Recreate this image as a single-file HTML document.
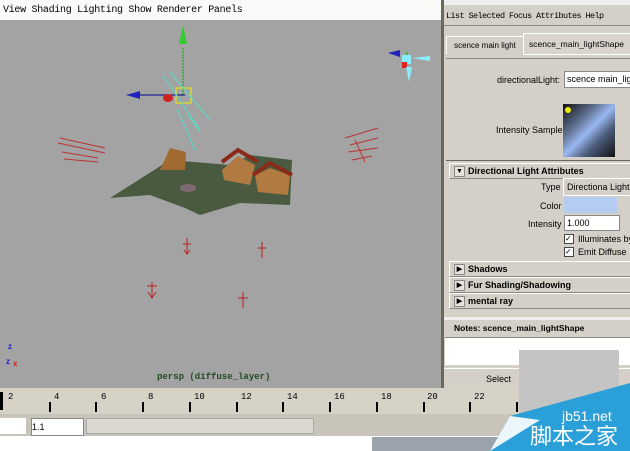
<!DOCTYPE html>
<html><head><style>
body{margin:0;width:630px;height:451px;overflow:hidden;position:relative;background:#fff;font-family:"Liberation Sans",sans-serif;}
.a{position:absolute;white-space:nowrap}
.mono{font-family:"Liberation Mono",monospace}
.hdr{position:absolute;left:449px;width:181px;height:14px;background:#d4d0c8;border:1px solid #fff;border-right:none;border-bottom-color:#888;font-size:9px;font-weight:bold;line-height:14px;white-space:nowrap}
.hdr span.t{position:absolute;left:4px;top:2px;width:9px;height:9px;border:1px solid #888;background:#e8e4dc;font-size:7px;line-height:9px;text-align:center}
.hdr span.l{position:absolute;left:18px}
.lbl{position:absolute;font-size:9px;color:#000;white-space:nowrap}
</style></head><body>
<div class="a" style="left:0;top:0;width:442px;height:20px;background:#fafaf8;border-bottom:1px solid #ccc"></div>
<div class="a mono" style="left:3px;top:5px;font-size:10px;letter-spacing:-0.3px">View Shading Lighting Show Renderer Panels</div>
<div class="a" style="left:0;top:20px;width:441px;height:368px;background:#a3a3a3"></div>
<svg class="a" style="left:0;top:20px" width="441" height="368">
<line x1="183" y1="28" x2="183" y2="76" stroke="#0a0" stroke-dasharray="2,1"/>
<polygon points="183,5 179,24 187,24" fill="#3c3"/>
<line x1="130" y1="75" x2="185" y2="75" stroke="#008"/>
<polygon points="126,75 140,71 140,79" fill="#22b"/>
<ellipse cx="168" cy="78" rx="5" ry="4" fill="#c22"/>
<rect x="176" y="68" width="15" height="15" fill="none" stroke="#ee0"/>
<path d="M163,55 L200,110 M170,52 L210,100 M178,90 L195,130 M188,95 L200,112" stroke="#5dc" fill="none"/>
<path d="M60,118 L105,128 M58,123 L105,133 M62,132 L98,138 M64,139 L98,142" stroke="#b33" fill="none"/>
<path d="M345,118 L378,108 M350,125 L378,118 M348,132 L378,128 M352,140 L372,136 M355,120 L365,142" stroke="#b33" fill="none"/>
<polygon points="110,178 170,140 230,145 250,135 292,140 290,185 240,183 200,195 185,188 150,175" fill="#4a5a40"/>
<polygon points="160,150 170,128 186,132 185,150" fill="#a06a30"/>
<polygon points="222,150 238,136 255,145 250,165 224,160" fill="#b07a40"/>
<polygon points="255,155 270,148 290,155 288,175 258,172" fill="#b07a40"/>
<path d="M222,142 L238,130 L258,142" stroke="#8a2a18" stroke-width="4" fill="none"/>
<path d="M253,155 L270,143 L292,155" stroke="#8a2a18" stroke-width="4" fill="none"/>
<ellipse cx="188" cy="168" rx="8" ry="4" fill="#7a6a70"/>
<g stroke="#b22" fill="none"><path d="M187,218 v16 M183,224 h8 M184,230 l3,4 l3,-4"/><path d="M262,222 v16 M258,228 h8"/><path d="M152,262 v16 M147,266 h10 M148,272 l4,6 l4,-6"/><path d="M243,272 v16 M238,278 h10"/></g>
<polygon points="407,30 404,44 410,44" fill="#3b3"/>
<polygon points="388,33 400,30 400,37" fill="#22b"/>
<rect x="402" y="35" width="9" height="9" fill="#8ef"/>
<rect x="402" y="42" width="5" height="6" fill="#d22"/>
<polygon points="412,38 430,36 430,41" fill="#8ef"/>
<polygon points="406,47 409,62 412,47" fill="#8ef"/>
<text x="8" y="329" font-size="8" fill="#22c" font-weight="bold">z</text>
<text x="6" y="344" font-size="8" fill="#22c" font-weight="bold">z</text>
<text x="13" y="346" font-size="8" fill="#c22" font-weight="bold">x</text>
</svg>
<div class="a mono" style="left:157px;top:372px;font-size:9px;color:#234a23;font-weight:bold">persp (diffuse_layer)</div>
<div class="a" style="left:441px;top:0;width:186px;height:388px;background:#d4d0c8;border-left:3px solid #6a6a58"></div>
<div class="a" style="left:444px;top:0;width:186px;height:5px;background:#eee"></div>
<div class="a mono" style="left:446px;top:11px;font-size:8.5px;letter-spacing:-0.6px">List Selected Focus Attributes Help</div>
<div class="a" style="left:444px;top:25px;width:186px;height:1px;background:#888"></div>
<div class="a" style="left:446px;top:36px;width:76px;height:17px;border:1px solid #fff;border-bottom:none;font-size:8px;line-height:17px;text-align:center">scence main light</div>
<div class="a" style="left:523px;top:33px;width:107px;height:20px;border:1px solid #fff;border-right:none;background:#d8d4cc;font-size:8.5px;line-height:20px;padding-left:5px">scence_main_lightShape</div>
<div class="a" style="left:446px;top:58px;width:184px;height:1px;background:#888"></div>
<div class="lbl" style="left:497px;top:75px">directionalLight:</div>
<div class="a" style="left:564px;top:71px;width:66px;height:15px;background:#fff;border:1px solid #888;font-size:9px;line-height:15px;padding-left:2px;overflow:hidden">scence main_lig</div>
<div class="lbl" style="left:496px;top:125px">Intensity Sample</div>
<div class="a" style="left:563px;top:104px;width:52px;height:53px;background:linear-gradient(135deg,#111 0%,#5a6a88 30%,#9ab8f0 50%,#4a5a78 70%,#111 100%)"></div>
<div class="a" style="left:565px;top:107px;width:6px;height:6px;background:#ee0;border-radius:3px"></div>
<div class="a" style="left:446px;top:160px;width:184px;height:1px;background:#666"></div>
<div class="hdr" style="top:163px"><span class="t">▼</span><span class="l">Directional Light Attributes</span></div>
<div class="lbl" style="left:541px;top:182px">Type</div>
<div class="a" style="left:563px;top:178px;width:67px;height:16px;background:#d4d0c8;border:1px solid #fff;border-right:none;font-size:9px;line-height:16px;padding-left:3px;overflow:hidden">Directiona Light</div>
<div class="lbl" style="left:540px;top:201px">Color</div>
<div class="a" style="left:564px;top:197px;width:53px;height:16px;background:#b4ccf2"></div>
<div class="lbl" style="left:528px;top:219px">Intensity</div>
<div class="a" style="left:564px;top:215px;width:52px;height:14px;background:#fff;border:1px solid #888;font-size:9px;line-height:14px;padding-left:2px">1.000</div>
<div class="a" style="left:564px;top:234px;width:8px;height:8px;border:1px solid #444;background:#fff;font-size:8px;line-height:8px">✓</div>
<div class="lbl" style="left:578px;top:234px">Illuminates by</div>
<div class="a" style="left:564px;top:247px;width:8px;height:8px;border:1px solid #444;background:#fff;font-size:8px;line-height:8px">✓</div>
<div class="lbl" style="left:578px;top:247px">Emit Diffuse</div>
<div class="hdr" style="top:261px"><span class="t">▶</span><span class="l">Shadows</span></div>
<div class="hdr" style="top:277px"><span class="t">▶</span><span class="l">Fur Shading/Shadowing</span></div>
<div class="hdr" style="top:293px"><span class="t">▶</span><span class="l">mental ray</span></div>
<div class="a" style="left:444px;top:317px;width:186px;height:3px;background:#eee"></div>
<div class="a" style="left:446px;top:321px;width:184px;height:15px;font-size:8.5px;font-weight:bold;line-height:15px;padding-left:8px">Notes: scence_main_lightShape</div>
<div class="a" style="left:445px;top:337px;width:185px;height:27px;background:#fff;border-top:1px solid #888"></div>
<div class="a" style="left:444px;top:368px;width:186px;height:20px;border-top:1px solid #fff;font-size:9px;line-height:20px"><span style="margin-left:42px">Select</span></div>
<div class="a" style="left:0;top:388px;width:630px;height:26px;background:#d6d2c6"></div>
<svg class="a mono" style="left:0;top:388px" width="630" height="26" font-size="9" font-family="Liberation Mono">
<rect x="0" y="4" width="3" height="18" fill="#000"/>
<g fill="#000"><text x="8" y="11">2</text><text x="54" y="11">4</text><text x="101" y="11">6</text><text x="148" y="11">8</text><text x="194" y="11">10</text><text x="241" y="11">12</text><text x="287" y="11">14</text><text x="334" y="11">16</text><text x="381" y="11">18</text><text x="427" y="11">20</text><text x="474" y="11">22</text></g>
<g stroke="#000" stroke-width="2"><line x1="50" y1="14" x2="50" y2="24"/><line x1="96" y1="14" x2="96" y2="24"/><line x1="143" y1="14" x2="143" y2="24"/><line x1="190" y1="14" x2="190" y2="24"/><line x1="237" y1="14" x2="237" y2="24"/><line x1="283" y1="14" x2="283" y2="24"/><line x1="330" y1="14" x2="330" y2="24"/><line x1="377" y1="14" x2="377" y2="24"/><line x1="424" y1="14" x2="424" y2="24"/><line x1="470" y1="14" x2="470" y2="24"/><line x1="517" y1="14" x2="517" y2="24"/></g>
</svg>
<div class="a" style="left:0;top:414px;width:630px;height:22px;background:#c8c4ba"></div>
<div class="a" style="left:0;top:418px;width:26px;height:16px;background:#fff"></div>
<div class="a" style="left:31px;top:418px;width:51px;height:16px;background:#fff;border:1px solid #888;font-size:9px;line-height:16px">1.1</div>
<div class="a" style="left:86px;top:418px;width:226px;height:14px;background:#dcd8d0;border:1px solid #aaa"></div>
<div class="a" style="left:0;top:437px;width:372px;height:14px;background:#fff"></div>
<div class="a" style="left:372px;top:437px;width:258px;height:14px;background:#9aa2ac"></div>
<div class="a" style="left:519px;top:350px;width:100px;height:80px;background:#c4c4c4"></div>
<svg class="a" style="left:480px;top:380px" width="150" height="71"><polygon points="10,71 30,36 150,3 150,71" fill="#2ba0d8"/><polygon points="10,71 30,36 60,40" fill="#fff" opacity="0.9"/></svg>
<div class="a" style="left:562px;top:408px;font-size:14px;color:#fff">jb51.net</div>
<div class="a" style="left:530px;top:422px;font-size:22px;color:#fff;font-family:'Noto Sans CJK SC',sans-serif;line-height:26px">脚本之家</div>
</body></html>
